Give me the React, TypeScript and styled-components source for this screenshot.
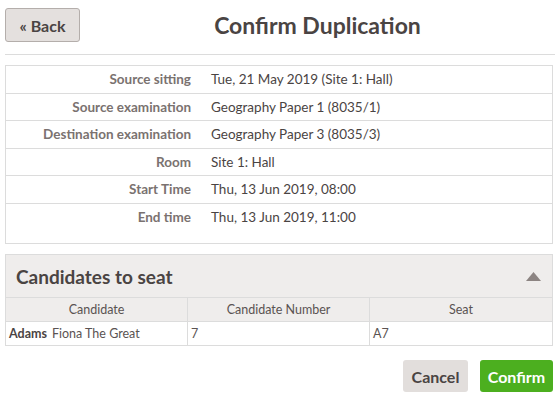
import React from "react";
import styled, { createGlobalStyle } from "styled-components";

const Global = createGlobalStyle`
  html, body { margin: 0; padding: 0; background: #fff; }
  body { font-family: Lato, "Noto Sans", sans-serif; color: #4a4443; }
  * { box-sizing: border-box; }
`;

const Page = styled.div`
  width: 560px;
  padding: 8px 7px 0 5px;
`;

const Header = styled.div`
  display: flex;
  align-items: center;
  padding-bottom: 12px;
  border-bottom: 1px solid #dcdcdc;
  margin-right: -2px;
`;

const BackButton = styled.button`
  width: 75px;
  height: 34px;
  background: #e4e0de;
  border: 1px solid #b4aeab;
  border-radius: 3px;
  font-family: inherit;
  font-size: 16px;
  font-weight: 700;
  color: #4a4443;
  padding: 0;
`;

const Title = styled.h1`
  flex: 1;
  margin: 0;
  text-align: center;
  font-size: 23px;
  font-weight: 700;
  color: #4a4443;
`;

const DetailsBox = styled.div`
  margin-top: 10px;
  border: 1px solid #dcdcdc;
  padding-bottom: 12px;
`;

const DetailRow = styled.div<{ $last?: boolean }>`
  display: grid;
  grid-template-columns: 185px 1fr;
  column-gap: 20px;
  align-items: center;
  height: 27.5px;
  border-bottom: ${(p) => (p.$last ? "none" : "1px solid #dcdcdc")};
  font-size: 13.5px;
`;

const Label = styled.div`
  text-align: right;
  font-weight: 700;
  color: #7a7270;
`;

const Value = styled.div`
  color: #4a4443;
`;

const Panel = styled.div`
  margin-top: 10px;
  border: 1px solid #dcdcdc;
`;

const PanelHeader = styled.div`
  display: flex;
  align-items: center;
  justify-content: space-between;
  height: 43px;
  padding: 0 11px 0 10px;
  background: #efedec;
  border-bottom: 1px solid #dcdcdc;
`;

const PanelTitle = styled.h2`
  margin: 0;
  font-size: 19px;
  font-weight: 700;
  color: #4a4443;
`;

const Table = styled.div`
  display: grid;
  grid-template-columns: 1fr 1fr 1fr;
`;

const Cell = styled.div<{ $head?: boolean; $lastCol?: boolean }>`
  height: ${(p) => (p.$head ? "24px" : "23px")};
  display: flex;
  align-items: center;
  justify-content: ${(p) => (p.$head ? "center" : "flex-start")};
  padding: 0 3px;
  font-size: 12.5px;
  color: #5a5352;
  background: ${(p) => (p.$head ? "#efedec" : "#fff")};
  border-right: ${(p) => (p.$lastCol ? "none" : "1px solid #dcdcdc")};
  border-bottom: ${(p) => (p.$head ? "1px solid #dcdcdc" : "none")};
`;

const Surname = styled.b`
  font-weight: 700;
  margin-right: 5px;
  color: #4a4443;
`;

const Actions = styled.div`
  display: flex;
  justify-content: flex-end;
  gap: 12px;
  margin-top: 14px;
`;

const ActionButton = styled.button<{ $primary?: boolean }>`
  height: 32px;
  width: ${(p) => (p.$primary ? "73px" : "65px")};
  padding: 0;
  border: none;
  border-radius: 3px;
  font-family: inherit;
  font-size: 16px;
  font-weight: 700;
  background: ${(p) => (p.$primary ? "#4caf1f" : "#e2dedc")};
  color: ${(p) => (p.$primary ? "#fff" : "#4a4443")};
`;

const details: [string, string][] = [
  ["Source sitting", "Tue, 21 May 2019 (Site 1: Hall)"],
  ["Source examination", "Geography Paper 1 (8035/1)"],
  ["Destination examination", "Geography Paper 3 (8035/3)"],
  ["Room", "Site 1: Hall"],
  ["Start Time", "Thu, 13 Jun 2019, 08:00"],
  ["End time", "Thu, 13 Jun 2019, 11:00"],
];

export default function App() {
  return (
    <Page>
      <Global />
      <Header>
        <BackButton>« Back</BackButton>
        <Title>Confirm Duplication</Title>
      </Header>
      <DetailsBox>
        {details.map(([l, v], i) => (
          <DetailRow key={l} $last={i === details.length - 1}>
            <Label>{l}</Label>
            <Value>{v}</Value>
          </DetailRow>
        ))}
      </DetailsBox>
      <Panel>
        <PanelHeader>
          <PanelTitle>Candidates to seat</PanelTitle>
          <svg width="15" height="9" viewBox="0 0 15 9">
            <polygon points="7.5,0 15,9 0,9" fill="#8c8482" />
          </svg>
        </PanelHeader>
        <Table>
          <Cell $head>Candidate</Cell>
          <Cell $head>Candidate Number</Cell>
          <Cell $head $lastCol>Seat</Cell>
          <Cell>
            <Surname>Adams</Surname>Fiona The Great
          </Cell>
          <Cell>7</Cell>
          <Cell $lastCol>A7</Cell>
        </Table>
      </Panel>
      <Actions>
        <ActionButton>Cancel</ActionButton>
        <ActionButton $primary>Confirm</ActionButton>
      </Actions>
    </Page>
  );
}
